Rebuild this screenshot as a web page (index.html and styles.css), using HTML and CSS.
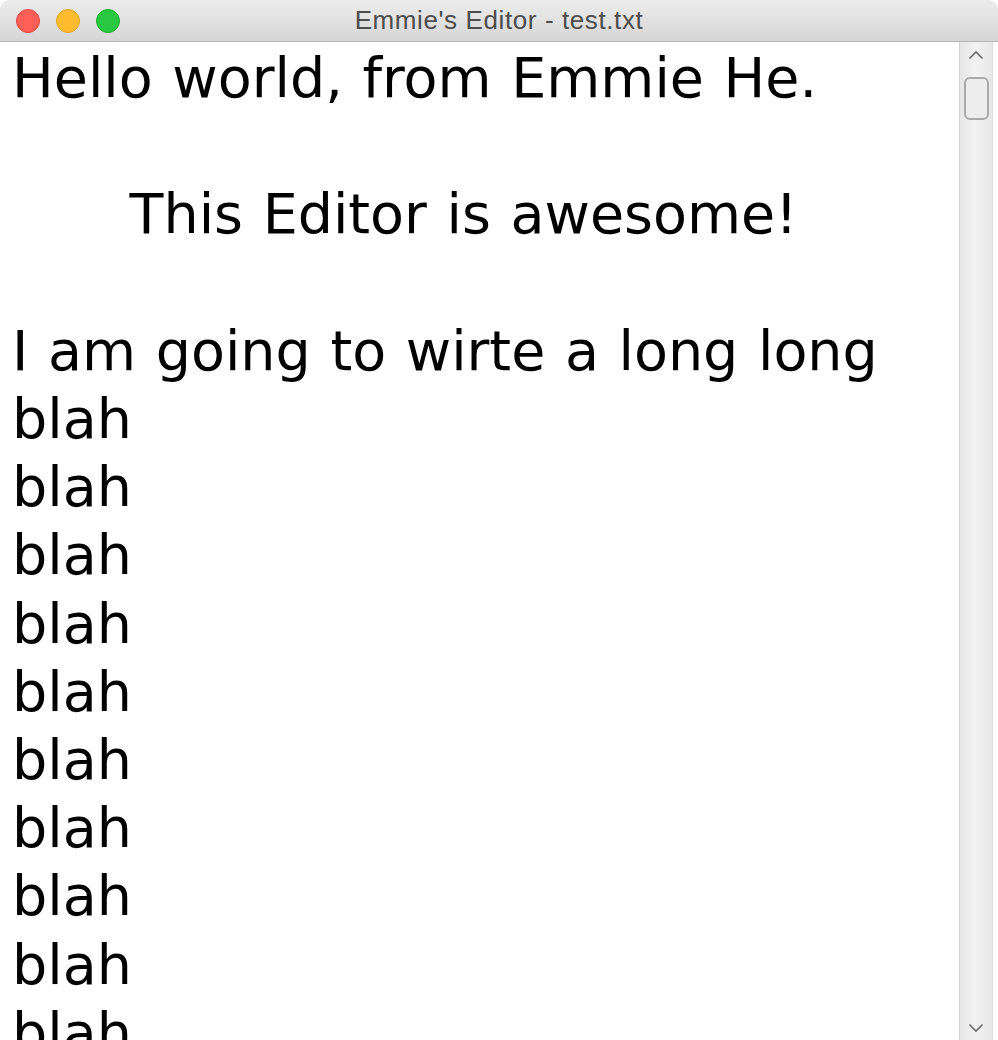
FILE: index.html
```html
<!DOCTYPE html>
<html>
<head>
<meta charset="utf-8">
<title>Emmie's Editor - test.txt</title>
<link rel="stylesheet" href="styles.css">
</head>
<body>
<div class="window">
  <div class="titlebar">
    <div class="lights">
      <span class="light red"></span>
      <span class="light yellow"></span>
      <span class="light green"></span>
    </div>
    <div class="title">Emmie's Editor - test.txt</div>
  </div>
  <div class="body">
    <div class="editor">
      <div class="line">Hello world, from Emmie He.</div>
      <div class="line">&nbsp;</div>
      <div class="line center">This Editor is awesome!</div>
      <div class="line">&nbsp;</div>
      <div class="line">I am going to wirte a long long</div>
      <div class="line">blah</div>
      <div class="line">blah</div>
      <div class="line">blah</div>
      <div class="line">blah</div>
      <div class="line">blah</div>
      <div class="line">blah</div>
      <div class="line">blah</div>
      <div class="line">blah</div>
      <div class="line">blah</div>
      <div class="line">blah</div>
    </div>
    <div class="scrollbar">
      <svg class="arrow up" width="16" height="10" viewBox="0 0 16 10"><polyline points="1.5,8.5 8,2 14.5,8.5" fill="none" stroke="#6d6d6d" stroke-width="1.6"/></svg>
      <div class="thumb"></div>
      <div class="track"></div>
      <svg class="arrow down" width="16" height="10" viewBox="0 0 16 10"><polyline points="1.5,1.5 8,8 14.5,1.5" fill="none" stroke="#6d6d6d" stroke-width="1.6"/></svg>
    </div>
  </div>
</div>
</body>
</html>
```

FILE: styles.css
```css
html, body {
  margin: 0;
  padding: 0;
  background: #ffffff;
}
.window {
  width: 998px;
  height: 1040px;
  display: flex;
  flex-direction: column;
  overflow: hidden;
}
.titlebar {
  height: 41px;
  flex: none;
  display: flex;
  align-items: center;
  background: linear-gradient(#ececec, #d6d6d6);
  border-bottom: 1px solid #b4b4b4;
  border-radius: 9px 9px 0 0;
  position: relative;
}
.lights {
  display: flex;
  gap: 16px;
  padding-left: 16px;
  padding-top: 1px;
}
.light {
  width: 24px;
  height: 24px;
  border-radius: 50%;
  box-sizing: border-box;
}
.red { background: #fe5f57; border: 1px solid #e1453f; }
.yellow { background: #febc2e; border: 1px solid #dea224; }
.green { background: #28c840; border: 1px solid #1caa2c; }
.title {
  position: absolute;
  left: 0;
  right: 0;
  top: 0;
  height: 41px;
  line-height: 41px;
  text-align: center;
  font-family: "Liberation Sans", Arial, sans-serif;
  font-size: 26px;
  letter-spacing: 0.6px;
  color: #4d4d4d;
}
.body {
  flex: 1;
  display: flex;
  min-height: 0;
}
.editor {
  flex: 1;
  overflow: hidden;
  padding: 2px 44px 0 12px;
  font-family: "DejaVu Sans", Verdana, sans-serif;
  font-size: 55.5px;
  word-spacing: 2px;
  line-height: 68.2px;
  color: #000;
}
.line {
  white-space: pre;
}
.center { text-align: center; }
.scrollbar {
  width: 32px;
  flex: none;
  display: flex;
  flex-direction: column;
  align-items: center;
  background: linear-gradient(90deg, #e6e6e6, #f2f2f2 50%, #e8e8e8);
  border-left: 1px solid #d2d2d2;
  border-right: 1px solid #dcdcdc;
  margin-right: 5px;
}
.arrow {
  flex: none;
}
.arrow.up { margin: 8px 0 17px; }
.arrow.down { margin: 0 0 7px; }
.thumb {
  width: 25px;
  height: 43px;
  box-sizing: border-box;
  border: 2px solid #a9a9a9;
  border-radius: 6px;
  background: #ededed;
  flex: none;
}
.track { flex: 1; }
```
